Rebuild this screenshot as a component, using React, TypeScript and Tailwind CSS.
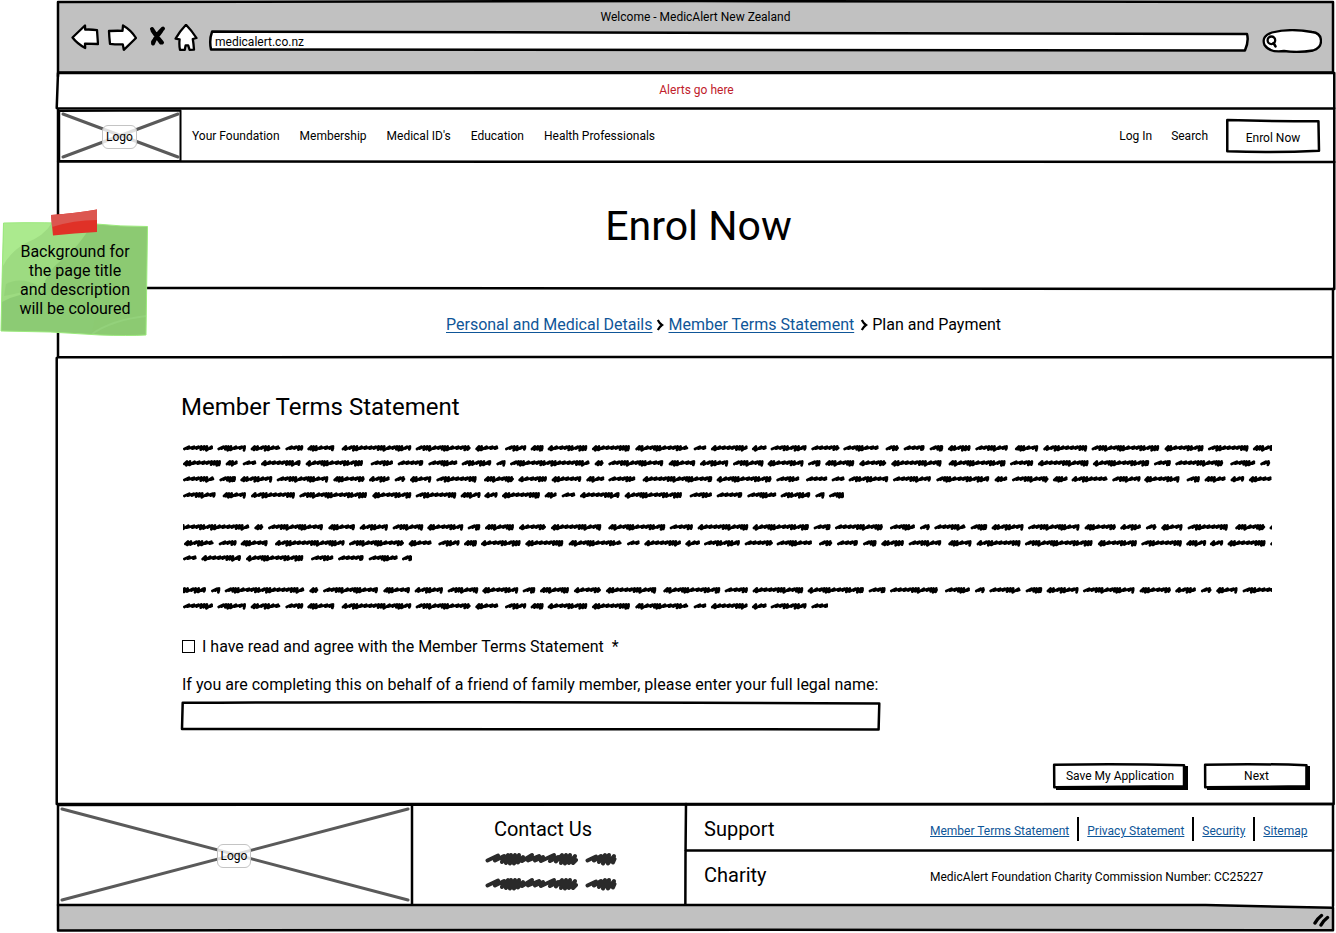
import type { ReactNode } from "react";

/* ---------- Hand-drawn frame ---------- */

type FrameProps = { d: string; fill?: string; weight?: number };

/* Outline stretched over its relative parent; the path lives in a 1000 x 100 box. */
function Frame({ d, fill = "none", weight = 2.5 }: FrameProps) {
  return (
    <svg
      aria-hidden="true"
      className="pointer-events-none absolute inset-0 h-full w-full overflow-visible"
      viewBox="0 0 1000 100"
      preserveAspectRatio="none"
    >
      <path
        d={d}
        fill={fill}
        stroke="#000"
        strokeWidth={weight}
        strokeLinejoin="round"
        strokeLinecap="round"
        vectorEffect="non-scaling-stroke"
      />
    </svg>
  );
}

/* ---------- Scribbled copy ---------- */

const LOOP = 7512;

const PART_A = [
  40, 130, 143, 229, 243, 332, 347, 401, 413, 494, 516, 725, 738, 903, 917, 986, 1006, 1070, 1083,
  1122, 1134, 1253, 1267, 1381, 1397, 1556, 1572, 1610, 1624, 1734, 1747, 1791, 1803, 1911, 1925,
  2010, 2021, 2127, 2148, 2188, 2202, 2265, 2280, 2321, 2335, 2403, 2417, 2515, 2536, 2606, 2621,
  2753, 2766, 2969, 2985, 3102, 3115, 3237, 3250, 3310, 3321, 3361,
];
const PART_B = [
  40, 154, 168, 204, 219, 260, 274, 393, 408, 580, 603, 670, 684, 761, 776, 863, 876, 965, 980,
  1008, 1021, 1260, 1275, 1302, 1316, 1481, 1497, 1577, 1591, 1676, 1690, 1782, 1794, 1902, 1915,
  1953, 1967, 2054, 2069, 2150, 2165, 2316, 2337, 2508, 2521, 2591, 2605, 2757, 2770, 2939, 2953,
  3004, 3017, 3161, 3182, 3257, 3272, 3302,
];
const PART_C = [40, 134, 149, 199, 212, 308, 321, 476, 491, 585, 598, 660, 675, 707, 721, 785, 800, 921];

const STEPS = [14, 15, 13, 9, 9, 8, 16, 14, 8, 7, 8, 15, 17, 13, 8, 9, 16, 8, 9, 14];

function scribbleWord(from: number, to: number, seed: number): string {
  let x = from + 4;
  let i = seed % STEPS.length;
  let d = `M${x} 57`;
  while (x < to - 7) {
    const step = Math.min(STEPS[i % STEPS.length], to - 4 - x);
    const dense = step < 11;
    const rise = dense ? 49 : 50;
    const drop = dense ? 58 + ((i * 3) % 4) : 56;
    d += `L${x + step} ${rise}L${x + step - (dense ? 2 : 5)} ${drop}`;
    x += step;
    i += 1;
  }
  return `${d}L${to - 4} 54`;
}

function scribblePath(): string {
  const words: number[][] = [];
  const add = (part: number[], shift: number) => {
    for (let i = 0; i < part.length; i += 2) words.push([part[i] + shift, part[i + 1] + shift]);
  };
  add(PART_A, 0);
  add(PART_B, 3334);
  add(PART_C, 6609);
  add(PART_A, LOOP);
  return words.map(([a, b], n) => scribbleWord(a, b, n * 7)).join("");
}

const SCRIBBLE = scribblePath();

/* y: top of the line, at: where the line starts in the loop, width: length of a short line */
const LINES: { y: number; at: number; width?: number }[] = [
  { y: 0, at: 40 },
  { y: 15, at: 3374 },
  { y: 31, at: 6649 },
  { y: 47, at: 2417, width: 661 },
  { y: 79, at: 4395 },
  { y: 95, at: 240 },
  { y: 110, at: 3553, width: 229 },
  { y: 142, at: 4230 },
  { y: 158, at: 40, width: 645 },
];

function ScribbledTerms() {
  return (
    <svg role="img" aria-label="Member terms" className="block h-[170px] w-full">
      {LINES.map((line) => (
        <svg key={line.y} x={1} y={line.y} width={line.width ?? "100%"} height={12} overflow="hidden">
          <path
            d={SCRIBBLE}
            transform={`scale(0.3333) translate(${-line.at} -36)`}
            fill="none"
            stroke="#000"
            strokeWidth={8}
            strokeLinecap="round"
            strokeLinejoin="round"
          />
        </svg>
      ))}
    </svg>
  );
}

function ContactScribble() {
  return (
    <svg aria-hidden="true" viewBox="0 0 132 14" className="h-[14px] w-[132px]">
      <path
        d="M2.5 8.5L13 3.5L10 8.5L19 4L17 10L23 3L21 11L26 3L25 11.5L30 3L29 11.5L34 3L33 10.5L38 5L37 9L47 3L43 8.5L54 4L50 8.5L58 5L56 9L69 3L65 9L73 5L71 9.5L77 3L76 11L81 3L80 11.5L85 3L84 11L90 4L88 11L91 8M102.5 8.5L111 4.5L109 8.5L116 4L114 10L120 3L118 11.5L124 3L123 11.5L129 4L128 10.5L129.500 7"
        fill="none"
        stroke="#2a2a2a"
        strokeWidth={4}
        strokeLinecap="round"
        strokeLinejoin="round"
      />
    </svg>
  );
}

/* ---------- Browser chrome ---------- */

function ToolIcon({ label, className, children }: { label: string; className: string; children: ReactNode }) {
  return (
    <button type="button" aria-label={label} className={className}>
      {children}
    </button>
  );
}

const ink = { stroke: "#000", strokeWidth: 2.3, strokeLinejoin: "round", strokeLinecap: "round" } as const;

function BrowserBar() {
  return (
    <header className="relative h-[71px] bg-[#c1c1c1]">
      <div className="pt-[7px] text-center text-xs leading-4">Welcome - MedicAlert New Zealand</div>
      <div className="-mt-px flex items-start pr-[11px] pl-[13px]">
        <ToolIcon label="Back" className="mr-2 h-7 w-7">
          <svg viewBox="0 0 28 28" className="h-7 w-7" fill="#fff" {...ink}>
            <path d="M1.5 13.5 L14 1.5 L14.2 5.6 Q20 5.2 26 6.2 L27 20 L14 19.6 L14.2 24 Q6 19.5 1.5 13.5Z" />
          </svg>
        </ToolIcon>
        <ToolIcon label="Forward" className="mr-[9px] h-7 w-[30px]">
          <svg viewBox="0 0 30 28" className="h-7 w-[30px]" fill="#fff" {...ink}>
            <path d="M2 7 Q8 6.6 15.5 6.8 L16 1.5 Q24 6 29 14 L16.8 25.8 L15.8 20.4 Q9 20.6 3 19.8 Q2.2 13 2 7Z" />
          </svg>
        </ToolIcon>
        <ToolIcon label="Stop" className="mr-1.5 h-7 w-[22px]">
          <svg viewBox="0 0 22 28" className="h-7 w-[22px]" fill="none" {...ink} strokeWidth={4}>
            <path d="M6 5 Q10 12 16 18.5 M17 4.5 Q10 11 7 19.5 M6.5 6.5 L15 18.5 M15.500 6.5 L7 18" />
          </svg>
        </ToolIcon>
        <ToolIcon label="Home" className="mr-3 h-7 w-6">
          <svg viewBox="0 0 24 28" className="h-7 w-6" fill="#fff" {...ink}>
            <path d="M12 .8 Q18 7 22.5 14 L18.8 15 Q19.6 20 20 25.6 L15.6 25.8 L14.2 21.4 L11.6 21.4 L10.8 25.8 L6 25.8 Q5 21 5.6 15.4 L1.6 14.6 Q6 7 12 .8Z" />
          </svg>
        </ToolIcon>
        <div className="relative mt-[7px] h-5 min-w-0 flex-1">
          <Frame d="M2 3 Q-1 45 1 92 Q400 99 998 97 Q1002 50 1000 15 Q700 2 2 3Z" fill="#fff" />
          <input
            type="text"
            aria-label="Address"
            defaultValue="medicalert.co.nz"
            className="relative block h-[18px] w-full bg-transparent pt-1 pl-[5px] text-xs outline-none"
          />
        </div>
        <div className="relative mt-[5px] ml-[15px] h-[22px] w-[60px]">
          <svg aria-hidden="true" viewBox="0 0 60 24" className="absolute inset-0 h-6 w-[60px]" fill="#fff" {...ink}>
            <path d="M10 3.5 Q28 -1 50 3 Q59 4 59 12 Q59 19 51 21.5 Q36 24 22 22 Q8 24 2.5 16 Q-1 7 10 3.5Z" />
            <circle cx="9.4" cy="11.3" r="3.8" />
            <path d="M11.5 14 L13.5 17.3" strokeWidth={2.6} />
          </svg>
          <input type="search" aria-label="Search the web" className="relative block h-full w-full bg-transparent pl-4 text-xs outline-none" />
        </div>
      </div>
    </header>
  );
}

/* ---------- Shared pieces ---------- */

function LogoBox({ cross, viewBox }: { cross: string; viewBox: string }) {
  return (
    <div className="relative flex h-full w-full items-center justify-center pr-0.5">
      <svg aria-hidden="true" viewBox={viewBox} preserveAspectRatio="none" className="absolute inset-0 h-full w-full">
        <path d={cross} fill="none" stroke="#5a5a5a" strokeWidth={3} strokeLinecap="round" />
      </svg>
      <span className="relative mt-0.5 rounded-md border border-[#c4c4c4] bg-white/80 px-[3px] py-0.5 text-xs leading-[18px]">Logo</span>
    </div>
  );
}

function Chevron() {
  return (
    <svg aria-hidden="true" viewBox="0 0 8 12" className="mx-1 h-3 w-2" fill="none" stroke="#000" strokeWidth={2.2}>
      <path d="M1.8 1 Q3.5 4.5 6 6 Q3.5 7.8 1.8 11" />
    </svg>
  );
}

function ShadowButton({ children, className }: { children: ReactNode; className: string }) {
  return (
    <button type="button" className={`relative h-6 text-xs ${className}`}>
      <span className="absolute inset-0 translate-x-0.5 translate-y-0.5 bg-black" />
      <Frame d="M1 3 Q500 -2 985 5 L985 93 Q500 96 2 97Z" fill="#fff" />
      <span className="relative">{children}</span>
    </button>
  );
}

function StickyNote() {
  return (
    <aside className="absolute top-[208px] left-0 w-[150px]">
      <svg aria-hidden="true" viewBox="0 0 150 130" className="absolute inset-0 h-[130px] w-[150px]">
        <path d="M3.5 15 Q40 14 96 16 Q120 18.5 147.5 18.5 L146 127 Q128 128 100 127 Q50 123 1 123 Q2 70 3.5 15Z" fill="#8cca72" />
        <path d="M3.5 15 L92 16 Q78 40 62 52 Q44 64 40 92 Q22 90 2 98Z" fill="#9ddb81" />
        <path d="M3.5 15 L52 15 Q44 28 26 35 Q10 44 3 58Z" fill="#abea8e" />
        <path d="M2 94 Q20 84 44 84 L96 104 L92 126 Q50 123 1 123Z" fill="#8ccb74" />
        <path d="M6 76 Q20 68 40 78 Q26 84 4 88Z" fill="#94d379" />
        <path d="M92 126 Q112 112 146 108" fill="none" stroke="#93d17b" strokeWidth={2} />
        <path d="M3.5 15 Q40 14 96 16 Q120 18.5 147.5 18.5 L146 127 Q128 128 100 127 Q50 123 1 123 Q2 70 3.5 15Z" fill="none" stroke="#9bea7c" strokeWidth={1} />
        <path d="M51 7 Q76 5 97 1.5 L97 24 Q74 25 53 27.5Z" fill="#e03127" />
        <path d="M51 7 Q76 5 97 1.5 L97 12 Q74 12 52 19Z" fill="#dc5650" />
      </svg>
      <p className="relative px-4 pt-[34px] text-center text-base leading-[19px]">
        Background for
        <br />
        the page title
        <br />
        and description
        <br />
        will be coloured
      </p>
    </aside>
  );
}

const link = "text-[#0f5698] underline underline-offset-2";
const smallLink = "text-[#0f5698] underline underline-offset-1";

/* ---------- Page ---------- */

export default function App() {
  return (
    <div className="relative bg-white pt-0.5 pr-[3px] pb-0.5 pl-[58px] font-['Roboto',sans-serif] text-black">
      <div className="relative">
        <BrowserBar />

        <div className="relative flex h-9 items-center justify-center pb-0.5 pl-0.5 text-xs text-[#c0202a]">
          <Frame d="M0 0 Q500 -2 1001 0 L1001 97 M0 0 L-1 97" />
          <span>Alerts go here</span>
        </div>

        <div className="relative flex h-[53px] items-center">
          <Frame d="M0 -1 Q300 3 1001 -1 L1001 100 Q500 97 0 99Z" />
          <div className="relative h-full w-[123px] py-0.5 pl-0.5">
            <Frame d="M10 4 L996 3 L996 98 L10 98Z" weight={2} />
            <LogoBox viewBox="0 0 121 49" cross="M3 3 L118 46 M3 46 L118 3" />
          </div>
          <nav className="ml-[11px] flex gap-5 text-xs">
            <a href="#foundation">Your Foundation</a>
            <a href="#membership">Membership</a>
            <a href="#ids">Medical ID's</a>
            <a href="#education">Education</a>
            <a href="#professionals">Health Professionals</a>
          </nav>
          <div className="mr-[14px] ml-auto flex items-center gap-[19px] text-xs">
            <a href="#login">Log In</a>
            <a href="#search">Search</a>
            <button type="button" className="relative h-8 w-[92px] pt-1">
              <Frame d="M3 0 Q500 4 994 4 L1000 96 Q500 103 3 98Z" />
              <span className="relative">Enrol Now</span>
            </button>
          </div>
        </div>

        <div className="relative flex h-[127px] items-center justify-center pl-1.5">
          <Frame d="M0 0 L0 100 M1001 0 L1001 100 Q500 98 0 99" />
          <h1 className="text-[41px] leading-[48px]">Enrol Now</h1>
        </div>

        <div className="relative flex h-[69px] items-center justify-center pt-0.5 pl-14">
          <Frame d="M0 0 L0 99 Q500 98 1000 99 L1000 0" />
          <nav aria-label="Steps" className="flex items-center text-base">
            <a href="#details" className={link}>Personal and Medical Details</a>
            <Chevron />
            <a href="#terms" className={link}>Member Terms Statement</a>
            <span className="w-0.5" />
            <Chevron />
            <span>Plan and Payment</span>
          </nav>
        </div>

        <main className="relative h-[446px] pt-[33px] pl-[123px]">
          <Frame d="M-1 0 L-1 100 Q500 99.600 1000.5 100 L1000 0" />
          <h2 className="text-2xl leading-8">Member Terms Statement</h2>
          <div className="mt-[19px] pr-[61px] pl-px">
            <ScribbledTerms />
          </div>
          <div className="mt-[25px] ml-px flex h-5 items-center">
            <input
              id="agree"
              type="checkbox"
              className="mb-0.5 h-[13px] w-[13px] appearance-none border border-black bg-white checked:bg-black"
            />
            <label htmlFor="agree" className="ml-[7px] text-base whitespace-pre">
              {"I have read and agree with the Member Terms Statement  *"}
            </label>
          </div>
          <label htmlFor="legal-name" className="mt-[18px] ml-px block text-base leading-5">
            If you are completing this on behalf of a friend of family member, please enter your full legal name:
          </label>
          <div className="relative mt-[7px] ml-px h-7 w-[698px] max-w-full">
            <Frame d="M1 3 Q400 -2 999 5 L998 98 Q500 94 0 96Z" />
            <input id="legal-name" type="text" className="relative block h-full w-full bg-transparent px-2 text-base outline-none" />
          </div>
          <div className="mt-[34px] flex justify-end gap-[19px] pr-[25px]">
            <ShadowButton className="w-[132px]">Save My Application</ShadowButton>
            <ShadowButton className="w-[103px]">Next</ShadowButton>
          </div>
        </main>

        <footer className="relative grid h-[101px] grid-cols-[354fr_274fr_647fr]">
          <Frame d="M0 1 Q500 1 1000 0 L1000 101 M0 1 L0 100" />
          <div className="relative py-0.5">
            <Frame d="M1000 1 L1000 100" />
            <LogoBox viewBox="0 0 354 97" cross="M4 3 L350 94 M4 94 L350 3" />
          </div>
          <section className="flex flex-col items-center pt-[11px]">
            <div className="flex flex-col items-center pr-3">
              <h2 className="text-xl leading-7">Contact Us</h2>
            </div>
            <div className="mt-[9px] ml-1 flex flex-col gap-[11px]">
              <ContactScribble />
              <ContactScribble />
            </div>
          </section>
          <section className="relative grid grid-rows-[46fr_55fr]">
            <Frame d="M0 0 Q-1 50 -1 100 M-1 46 Q500 45 1000 46" />
            <div className="grid grid-cols-[226px_1fr] items-center pt-1 pl-[18px]">
              <h2 className="text-xl">Support</h2>
              <nav className="flex items-center gap-[8px] text-xs leading-6 whitespace-nowrap">
                <a href="#member-terms" className={`pt-1 ${smallLink}`}>Member Terms Statement</a>
                <span className="h-6 w-0.5 bg-black" />
                <a href="#privacy" className={`pt-1 ${smallLink}`}>Privacy Statement</a>
                <span className="h-6 w-0.5 bg-black" />
                <a href="#security" className={`pt-1 ${smallLink}`}>Security</a>
                <span className="h-6 w-0.5 bg-black" />
                <a href="#sitemap" className={`pt-1 ${smallLink}`}>Sitemap</a>
              </nav>
            </div>
            <div className="grid grid-cols-[226px_1fr] items-center pb-1.5 pl-[18px]">
              <h2 className="text-xl">Charity</h2>
              <p className="pt-1 text-xs whitespace-nowrap">MedicAlert Foundation Charity Commission Number: CC25227</p>
            </div>
          </section>
        </footer>

        <div className="relative h-[26px]">
          <Frame d="M0 0 Q500 0 900 0 L1000 11 L1000 97 Q500 92 0 98Z" fill="#c1c1c1" />
          <svg aria-hidden="true" viewBox="0 0 18 14" className="absolute right-[3px] bottom-1 h-[14px] w-[18px]" fill="none" stroke="#000" strokeWidth={3.4} strokeLinecap="round">
            <path d="M3 10 Q5 6 9.5 2.5 M9 12 Q11 8 15.5 4.500" />
          </svg>
        </div>

        <Frame d="M0 0 Q500 -.2 1000 0 L1000 7.5 M0 7.6 Q500 7.5 1000 7.6 M0 0 L0 8" />
      </div>
      <StickyNote />
    </div>
  );
}
